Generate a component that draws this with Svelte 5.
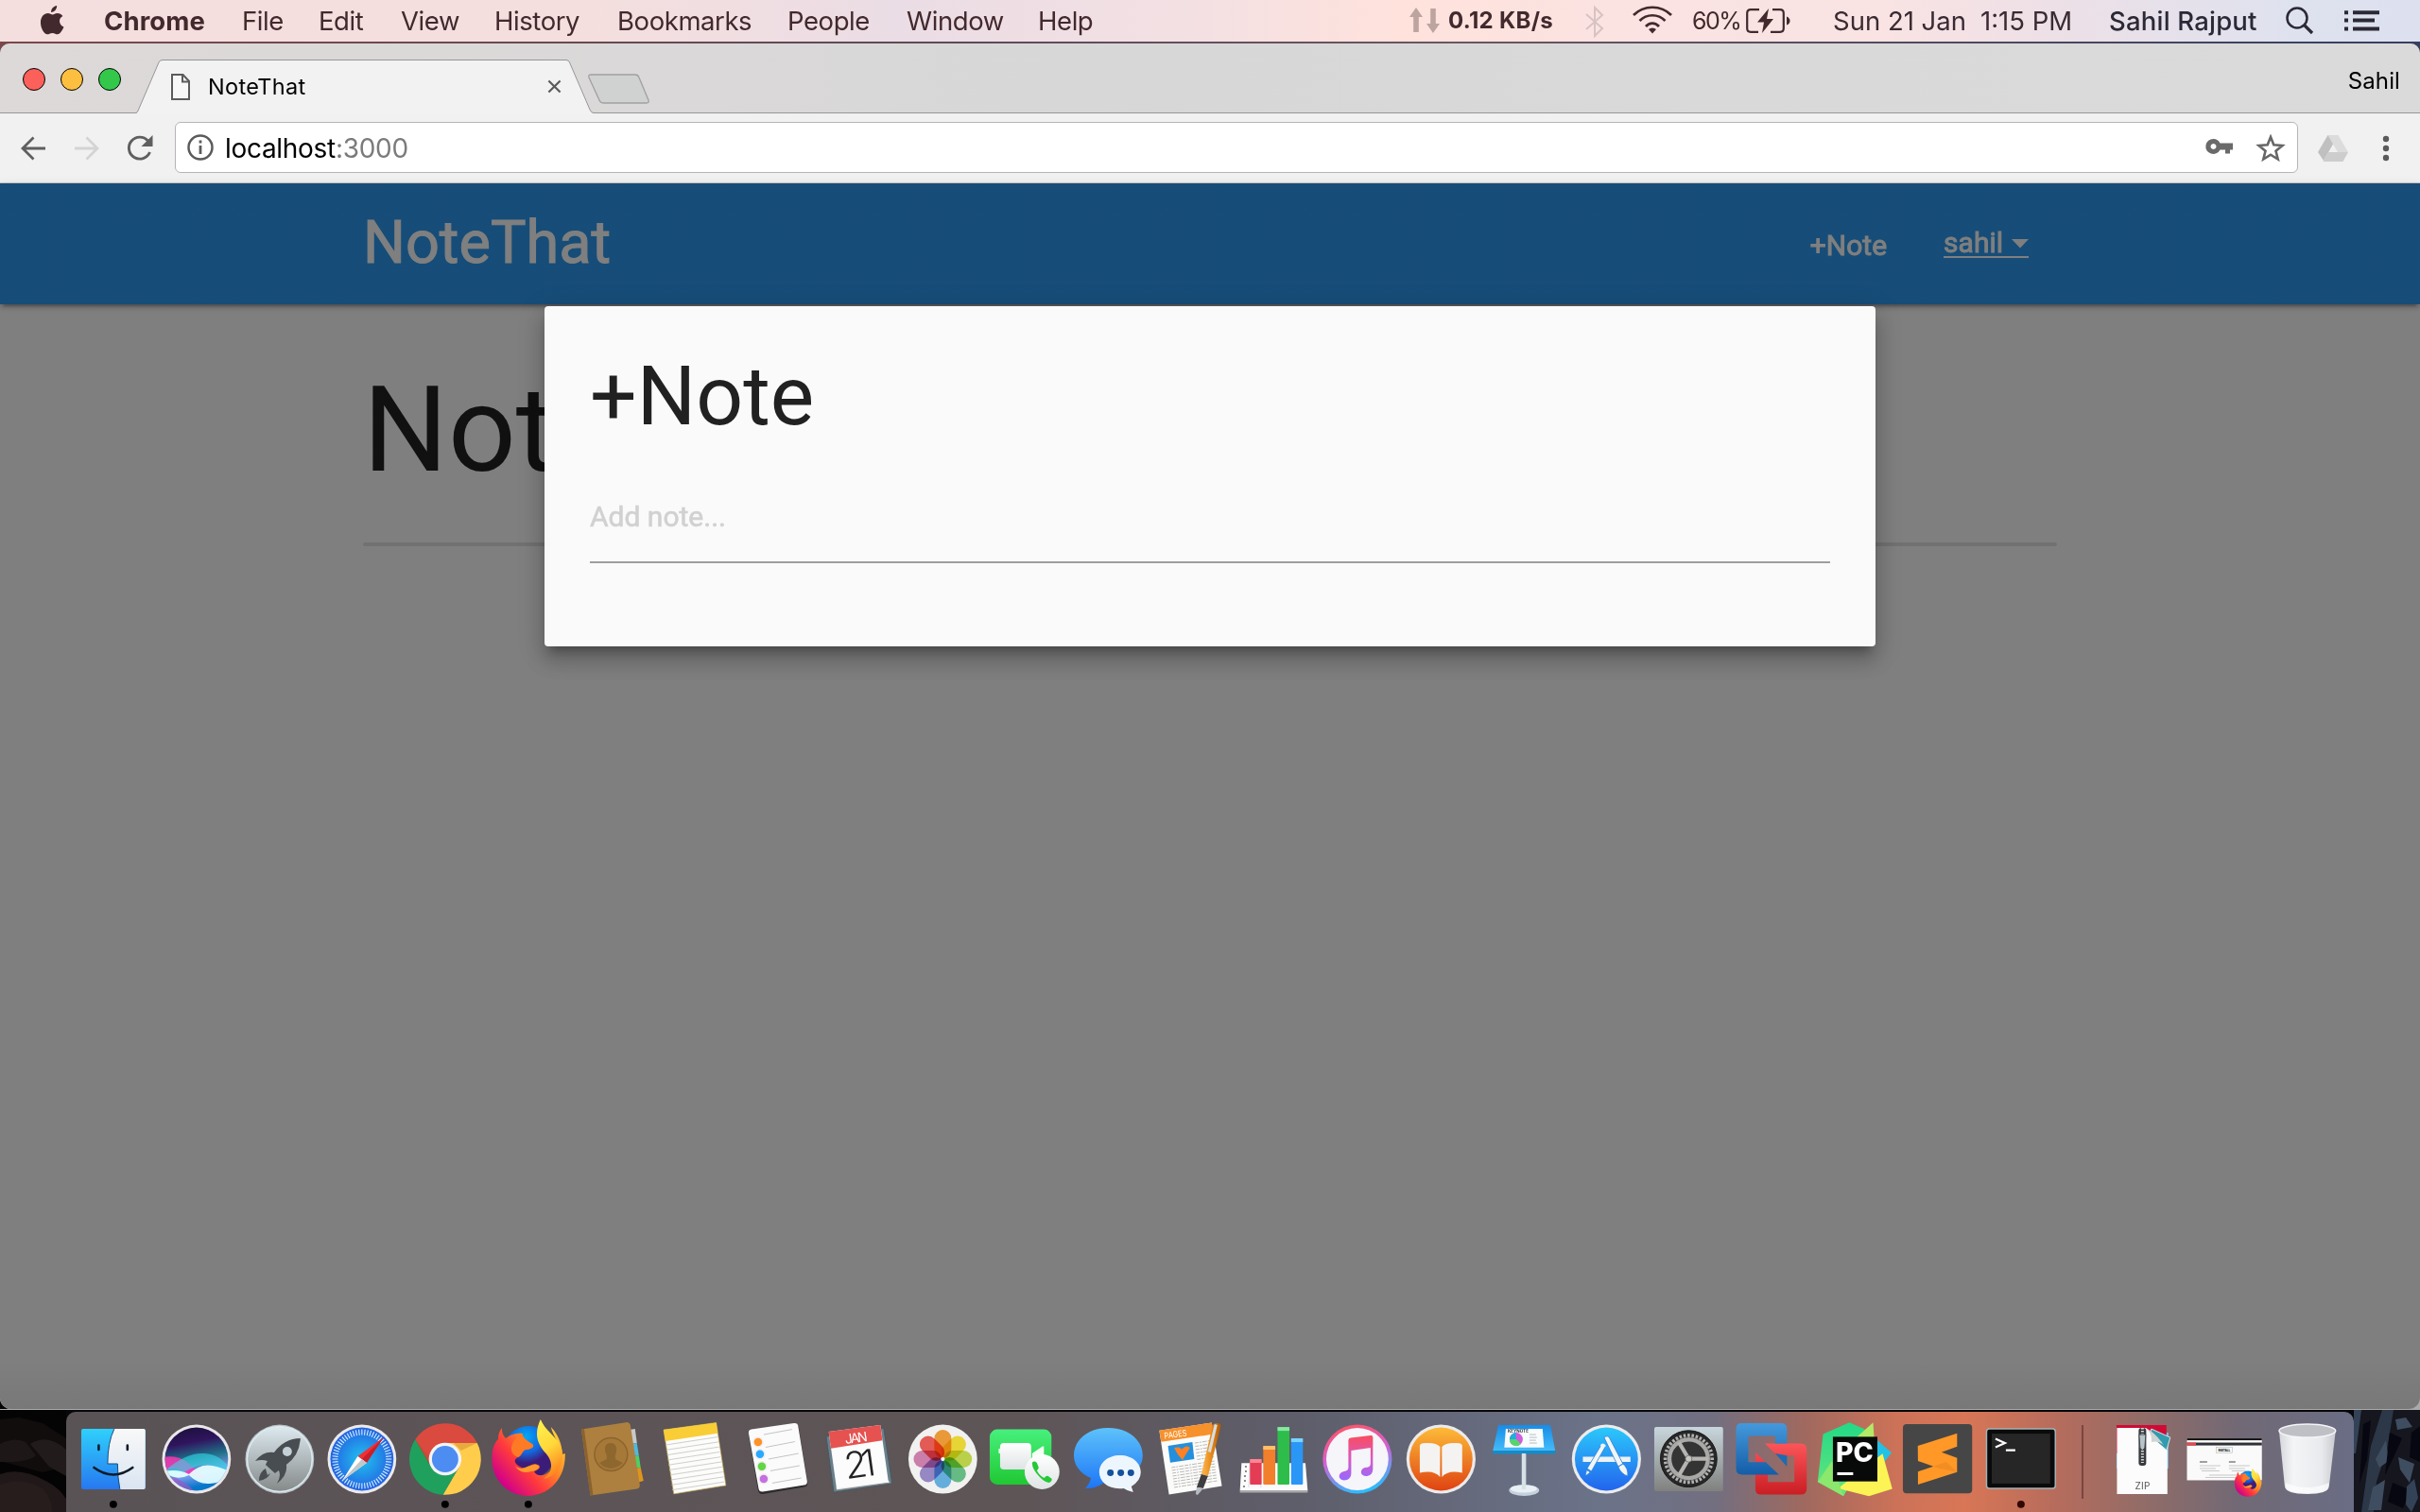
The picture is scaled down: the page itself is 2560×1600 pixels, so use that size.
<script>
  const menus = ['File', 'Edit', 'View', 'History', 'Bookmarks', 'People', 'Window', 'Help'];
  const petals = ['#f7a23b', '#f5e13a', '#c5dc4f', '#6cc58b', '#6bb8ea', '#a08fd0', '#d685b5', '#f0605a'];
  const ticks = Array.from({ length: 60 }, (_, i) => i * 6);
  const teeth = Array.from({ length: 36 }, (_, i) => i * 10);
  const noteLines = Array.from({ length: 10 }, (_, i) => 25 + i * 5.3);
  const textRows = Array.from({ length: 14 }, (_, i) => i);
</script>

{#snippet firefox()}
  <circle cx="44.5" cy="43" r="28" fill="url(#ffGlobe)" />
  <path d="M16 17C16 24 18 25 20 28C26 23 33 22 38 23C37 27 42 30 48 34C52 37 46 40 41 40C36 43 38 46 33 48C26 52 32 57 37 59C45 61 47 53 54 56C59 58 54 62 50 63C53 69 62 69 69 61C71 50 65 42 60 37C54 29 53 17 57 8C61 18 68 21 75 33C72 26 69 21 68 16C77 25 80 37 80 45L83 44C84 67 70 87 46 89C21 90 2 70 6 42C7 34 11 30 12 29C12 24 13 21 16 17Z" fill="url(#ffBody)" />
  <path d="M57 8C51 20 52 31 60 41C72 53 70 64 60 71C73 69 82 56 80 42C78 28 63 22 57 8Z" fill="url(#ffFlame)" />
  <path d="M38 23C37 27 42 30 48 34C52 37 46 40 41 40C36 43 38 46 33 48C23 45 23 31 38 23Z" fill="#ff7a25" />
  <path d="M30 57C38 65 45 54 53 56C59 58 52 63 47 63C40 65 34 64 30 57Z" fill="#ff9a2c" />
{/snippet}

<div class="screen">
  <header class="menubar">
    <svg class="apple" viewBox="0 0 28 34"><path d="M18.8 1C19 4.5 16.5 8 12.6 8.1C12.2 4.8 15.4 1.3 18.8 1ZM19.2 9.2C21.6 9.2 24 10.5 25.3 12.4C20 15.2 21 22 26.4 24.3C25.5 27 22.5 32.3 19.6 32.4C17.3 32.4 16.7 31 13.9 31C11.2 31 10.3 32.4 8.2 32.4C5.2 32.3 1 25.8 1 19.5C1 13 5 9.4 8.9 9.3C11.2 9.3 12.8 10.8 14.2 10.8C15.5 10.8 17 9.2 19.2 9.2Z" fill="#42292d" /></svg>
    <nav class="menus">
      <strong>Chrome</strong>
      {#each menus as menu}<span>{menu}</span>{/each}
    </nav>
    <div class="status">
      <svg class="net" viewBox="0 0 34 28"><path d="M8 0L15 10H10.8V26H5.2V10H1ZM26 27L33 17H28.8V1H23.2V17H19Z" fill="#bda49f" /></svg>
      <strong class="speed">0.12 KB/s</strong>
      <svg class="bt" viewBox="0 0 20 32"><path d="M1 8L18 23L10 31V1L18 9L1 24" fill="none" stroke="#d8c2c2" stroke-width="2" /></svg>
      <svg class="wifi" viewBox="0 0 42 30"><g fill="none" stroke="#42292d" stroke-width="2.7"><path d="M1 10C12-1 30-1 41 10M7.5 16C15 8.300 27 8.300 34.500 16M14 22C18 17.500 24 17.500 28 22" /></g><path d="M17 25C19.500 23 22.500 23 25 25L21 29.500Z" fill="#42292d" /></svg>
      <span class="pct">60%</span>
      <svg class="battery" viewBox="0 0 48 26"><path d="M14 1.200H5Q1.200 1.200 1.200 5V21Q1.200 24.800 5 24.800H13M28 1.200H36Q39.800 1.200 39.800 5V21Q39.800 24.800 36 24.800H26" fill="none" stroke="#42292d" stroke-width="2.200" /><path d="M24 0L12 14.500H19L17 26L29 11H22Z" fill="#42292d" /><path d="M43 8.500Q46.500 10 46.500 13T43 17.500Z" fill="#42292d" /></svg>
      <span class="date">Sun 21 Jan</span>
      <span class="time">1:15 PM</span>
      <span class="owner">Sahil Rajput</span>
      <svg class="search" viewBox="0 0 30 30"><circle cx="12" cy="12" r="10.500" fill="none" stroke="#2b2935" stroke-width="2.500" /><path d="M19.500 19.500L28 28" stroke="#2b2935" stroke-width="3.200" /></svg>
      <svg class="list" viewBox="0 0 38 22"><path d="M0 2.200H4M0 10.500H4M0 19.500H4M9 2.200H37M9 10.500H32M9 19.500H37" stroke="#2b2935" stroke-width="4" /></svg>
    </div>
  </header>

  <main class="window">
    <div class="tabstrip">
      <div class="lights"><i class="close"></i><i class="mini"></i><i class="zoom"></i></div>
      <div class="tab">
        <svg class="tab-shape" viewBox="0 0 484 57"><path d="M0 57Q1.500 56 2.500 53L24 3Q25 .500 28 .500H455Q457.500 .500 458.500 3L480 53Q481.500 56.500 484 56.500V58H0Z" fill="#f2f2f2" /><path d="M0 56.500Q1.500 56 2.500 53L24 3Q25 .500 28 .500H455Q457.500 .500 458.500 3L480 53Q481.500 56.500 484 56.500" fill="none" stroke="#979696" /></svg>
        <svg class="page-icon" viewBox="0 0 20 28"><path d="M1 1H12.500L19 8V27H1Z" fill="#fff" fill-opacity=".4" stroke="#5b5b5b" stroke-width="2" /><path d="M12 1V8.500H19" fill="none" stroke="#5b5b5b" stroke-width="2" /></svg>
        <span class="tab-title">NoteThat</span>
        <svg class="tab-close" viewBox="0 0 16 16"><path d="M1.500 1.500L14.500 14.500M14.500 1.500L1.500 14.500" stroke="#5a5a5a" stroke-width="2.300" /></svg>
      </div>
      <svg class="newtab" viewBox="0 0 68 33"><path d="M4 1H51Q54 1 55 4L65 28Q66 31 63 31H18Q14 31 13 28L2 4Q1 1 4 1Z" fill="#d0d1d1" stroke="#a0a0a0" stroke-width="1.300" /></svg>
      <span class="profile">Sahil</span>
    </div>

    <div class="toolbar">
      <svg class="back" viewBox="0 0 27 26"><path d="M26 13H2M13.500 1.500L2 13L13.500 24.500" fill="none" stroke="#5f5f5f" stroke-width="2.800" /></svg>
      <svg class="forward" viewBox="0 0 27 26"><path d="M1 13H25M13.500 1.500L25 13L13.500 24.500" fill="none" stroke="#d4d4d4" stroke-width="2.800" /></svg>
      <svg class="reload" viewBox="0 0 28 28"><path d="M22.500 6A11.500 11.500 0 1 0 24.500 18" fill="none" stroke="#5f5f5f" stroke-width="2.900" /><path d="M27.500 0V12H15.500Z" fill="#5f5f5f" /></svg>
      <div class="omnibox">
        <svg class="info" viewBox="0 0 28 28"><circle cx="14" cy="14" r="12.500" fill="none" stroke="#5b5b5b" stroke-width="2.500" /><path d="M14 12V21M14 6.500V9.500" stroke="#5b5b5b" stroke-width="2.800" /></svg>
        <span class="url">localhost<em>:3000</em></span>
        <svg class="key" viewBox="0 0 30 18"><path d="M8.500 1A8 8 0 1 0 15.500 12.500H21V16.500H26V12.500H29V5.500H15.500A8 8 0 0 0 8.500 1ZM8.500 6A3 3 0 1 1 8.490 6Z" fill="#6a6a6a" fill-rule="evenodd" /></svg>
        <svg class="star" viewBox="0 0 30 29"><path d="M15 3L18.300 11.300L27.500 12L20.500 17.800L22.700 26.500L15 21.700L7.300 26.500L9.500 17.800L2.500 12L11.700 11.300Z" fill="none" stroke="#666" stroke-width="2.600" /></svg>
      </div>
      <svg class="drive" viewBox="0 0 32 28"><path d="M10.500 0H21.500L16 9.500L6 27L0 18Z" fill="#c0c0c0" /><path d="M10.500 0H21.500L32 18H21Z" fill="#dcdcdc" /><path d="M11 18H32L26.500 28H5.500Z" fill="#cdcdcd" /></svg>
      <svg class="dots" viewBox="0 0 8 28"><circle cx="4" cy="4" r="3.200" /><circle cx="4" cy="14" r="3.200" /><circle cx="4" cy="24" r="3.200" /></svg>
    </div>

    <section class="page">
      <div class="navbar">
        <span class="brand">NoteThat</span>
        <span class="add">+Note</span>
        <span class="user">sahil <svg viewBox="0 0 18 10"><path d="M0 0H18L9 9.500Z" fill="#fff" /></svg></span>
      </div>
      <div class="content">
        <h1>Notes</h1>
        <hr />
      </div>
      <div class="overlay">
        <div class="modal">
          <h3>+Note</h3>
          <div class="field">Add note...</div>
        </div>
      </div>
    </section>
  </main>

  <footer class="desktop">
    <svg class="rocks left" viewBox="0 0 70 108"><rect width="70" height="108" fill="#050404" /><path d="M0 10L20 8L45 14L70 30V60L45 66L0 54Z" fill="#120d0d" /><path d="M0 36Q15 28 27 34L38 48Q30 56 0 55Z" fill="#1d1718" /><path d="M32 36Q50 24 70 42V70L52 60Z" fill="#211b1b" /><path d="M0 68Q22 60 50 76Q62 82 70 94V108H0Z" fill="#201819" /><path d="M0 79Q25 70 46 84Q56 96 55 108H0Z" fill="#271d1d" /></svg>

    <div class="dock">
      <svg class="icon" viewBox="0 0 88 106">
        <defs>
          <linearGradient id="finder" x2="0" y2="1"><stop stop-color="#2fd0fb" /><stop offset="1" stop-color="#2678f0" /></linearGradient>
          <linearGradient id="finderW" x2="0" y2="1"><stop stop-color="#f8f8f8" /><stop offset="1" stop-color="#dae5f2" /></linearGradient>
          <radialGradient id="ffGlobe" cx=".45" cy=".2"><stop stop-color="#00a8f5" /><stop offset=".6" stop-color="#1467df" /><stop offset="1" stop-color="#3c1c79" /></radialGradient>
          <linearGradient id="ffBody" x1=".85" y1=".1" x2=".1" y2=".8"><stop stop-color="#ffd23d" /><stop offset=".35" stop-color="#ff8b27" /><stop offset=".65" stop-color="#ff3a3d" /><stop offset="1" stop-color="#d1008a" /></linearGradient>
          <linearGradient id="ffFlame" x2=".3" y2="1"><stop stop-color="#fff34f" /><stop offset=".55" stop-color="#ffd83a" /><stop offset="1" stop-color="#ff8a20" /></linearGradient>
        </defs>
        <rect x="10" y="18" width="68" height="64" rx="2" fill="url(#finder)" />
        <path d="M45 18H76Q78 18 78 20V80Q78 82 76 82H51Q49 70 48.500 55H38Q38 32 45 18Z" fill="url(#finderW)" />
        <path d="M45 18Q38 32 38 55H48.500Q48.500 70 51 82" fill="none" stroke="#174c7c" stroke-width="1" />
        <path d="M28.500 35.500V40M59 35.500V40M23.500 59Q44 74 64.500 59" fill="none" stroke="#0f1c28" stroke-width="2.600" stroke-linecap="round" />
        <circle cx="44" cy="98" r="4" />
      </svg>

      <svg class="icon" viewBox="0 0 88 106">
        <defs><linearGradient id="siri" x2=".2" y2="1"><stop stop-color="#171033" /><stop offset=".3" stop-color="#30145e" /><stop offset=".55" stop-color="#206f87" /><stop offset=".8" stop-color="#7f9dec" /><stop offset="1" stop-color="#0876c9" /></linearGradient><clipPath id="siriClip"><circle cx="44" cy="50" r="33.500" /></clipPath></defs>
        <circle cx="44" cy="50" r="36.500" fill="#e9e7ea" /><circle cx="44" cy="50" r="33.500" fill="url(#siri)" />
        <g clip-path="url(#siriClip)">
          <path d="M9 48Q25 45 36 55T56 72Q40 70 30 63T9 64Z" fill="#fa36b3" fill-opacity=".85" />
          <path d="M11 62Q33 43 52 44T80 62L78 70Q60 46 31 64T11 62Z" fill="#32dbe9" fill-opacity=".6" />
          <path d="M9 63Q25 60 36 66Q48 54 61 57T80 64Q71 77 56 76Q45 76 36 67Q22 74 9 63Z" fill="#e5ffff" fill-opacity=".93" />
          <path d="M12 67Q30 71 42 84H20Z" fill="#9e58c5" fill-opacity=".7" />
        </g>
      </svg>

      <svg class="icon" viewBox="0 0 88 106">
        <defs><linearGradient id="launch" x2="0" y2="1"><stop stop-color="#dce9ef" /><stop offset="1" stop-color="#858989" /></linearGradient></defs>
        <circle cx="44" cy="50" r="36.500" fill="#b8c2c7" /><circle cx="44" cy="50" r="34.500" fill="url(#launch)" stroke="#dcebf1" stroke-width="1.500" />
        <path d="M66 28Q49 28 38 43Q27 41 18 52Q25 50 31 52L29 56L39 65L43 62Q46 68 41 76Q53 67 51 56Q65 46 66 28Z" fill="#474d50" />
        <circle cx="52" cy="42" r="5" fill="#c3d0d5" /><path d="M29 60Q22 64 22 73Q31 72 34 65L31 67Z" fill="#474d50" />
      </svg>

      <svg class="icon" viewBox="0 0 88 106">
        <defs><radialGradient id="safari"><stop stop-color="#20c3ef" /><stop offset="1" stop-color="#2463e2" /></radialGradient></defs>
        <circle cx="44" cy="50" r="36.500" fill="#eceaea" /><circle cx="44" cy="50" r="33.500" fill="url(#safari)" />
        {#each ticks as angle}<path d="M44 18.500V24.500" stroke="#d6eefc" stroke-width="1.100" transform="rotate({angle} 44 50)" />{/each}
        <path d="M67 27L39.500 47L49 54Z" fill="#f12f35" /><path d="M49 54L67 27L44 50Z" fill="#c91f29" /><path d="M23 73L39.500 47L49 54Z" fill="#fff" /><path d="M49 54L23 73L44 50Z" fill="#c2c7c9" />
      </svg>

      <svg class="icon" viewBox="0 0 88 106">
        <path d="M12.300 29.100A38 38 0 0 1 78 33H44L29.300 58.500Z" fill="#db4a3f" />
        <path d="M78 33A38 38 0 0 1 41.700 87.900L58.700 58.500L44 33Z" fill="#ffcd4b" />
        <path d="M41.700 87.900A38 38 0 0 1 12.300 29.100L29.300 58.500H58.700Z" fill="#1fa15d" />
        <path d="M53 33H78L61 41ZM13 31L29 59L27 47Z" fill="#a34518" fill-opacity=".25" />
        <circle cx="44" cy="50" r="17.300" fill="#f4f4f4" /><circle cx="44" cy="50" r="14" fill="#4d8df2" />
        <circle cx="44" cy="98" r="4" />
      </svg>

      <svg class="icon" viewBox="0 0 88 106">{@render firefox()}<circle cx="44" cy="98" r="4" /></svg>

      <svg class="icon" viewBox="0 0 88 106">
        <path d="M63 19L69 18L71 33L65 34Z" fill="#c9c9c9" /><path d="M65 34L71 33L73 46L67 47Z" fill="#50b9df" /><path d="M67 47L73 46L75 59L69 60Z" fill="#4fcf67" /><path d="M69 60L75 59L78 73L71 75Z" fill="#df951d" />
        <path d="M12 18.500L59 11Q63 10.500 64 14L74 77Q74.500 81 71 81.500L21.600 88.700Z" fill="#ad803f" /><path d="M12 18.500L15 18L24.500 88L21.600 88.700Z" fill="#8b622d" />
        <circle cx="43.500" cy="45" r="17.500" fill="#a67939" stroke="#8c642d" stroke-width="1.500" />
        <path d="M43 33C36 33 36 41 39 46V50L31 54Q43 66 56 54L48 50V46C51 39 49 33 43 33Z" fill="#8e672f" />
      </svg>

      <svg class="icon" viewBox="0 0 88 106">
        <path d="M12 19L67.900 11.300L78.200 78L22.800 87Z" fill="#fcfcfa" stroke="#b79b46" stroke-width=".7" />
        <path d="M12 19L67.900 11.300L69.300 22.700L14 31Z" fill="#f9cd35" />
        {#each noteLines as y, i}<path d="M{14.200 + i * .8} {y + 10}L{69.300 + i * .8} {y + 1.500}" stroke="#c8c8c8" stroke-width=".9" />{/each}
      </svg>

      <svg class="icon" viewBox="0 0 88 106">
        <path d="M17 20L62 13Q66 12 67 16L76.500 75Q77 79 73 79.500L29 87Q25 87.500 24 83L14 24Q13.500 21 17 20Z" fill="#2d2a2b" />
        <path d="M17 18.500L62 12Q66 11.500 66.500 15L76 73Q76.500 77 73 77.500L29 84.500Q25 85 24.500 81L14 23Q13.500 19 17 18.500Z" fill="#fbfbfb" />
        <path d="M30 24L60 18.500M32 37.500L63 31.500M35 50L67 44M37 62.500L68 57M39 75.500L70 70" stroke="#c4c4c4" />
        <g stroke="#eee" stroke-width="1.500"><circle cx="24" cy="32" r="5" fill="#ff9226" /><circle cx="26" cy="44.700" r="5" fill="#29a9ff" /><circle cx="28" cy="57.700" r="5" fill="#62d641" /><circle cx="30" cy="71" r="5" fill="#c66fe0" /></g>
      </svg>

      <svg class="icon" viewBox="0 0 88 106">
        <path d="M8 26L69 17L78 76L16 85.300Z" fill="#6a7f8a" stroke="#455862" /><path d="M19 83L76 75L74 72L18 80Z" fill="#eee" stroke="#777" stroke-width=".8" />
        <path d="M10.700 21L65.500 14L74.100 74.300L19 81Z" fill="#fcfcfc" /><path d="M10.700 21L65.500 14L67.600 30.300L13.100 38.700Z" fill="#e55250" />
        <g transform="rotate(-8 44 50)" text-anchor="middle" font-family="Inter, sans-serif"><text x="43" y="32" font-size="14" fill="#fff" textLength="24">JAN</text><text x="43" y="69" font-size="39" font-weight="300" fill="#222" textLength="33">21</text></g>
      </svg>

      <svg class="icon" viewBox="0 0 88 106">
        <circle cx="44.500" cy="50" r="36.500" fill="#f1f1f0" />
        <g class="petals">{#each petals as color, i}<rect x="35.500" y="19" width="18" height="30" rx="9" fill={color} transform="rotate({i * 45} 44.500 50)" />{/each}</g>
        <circle cx="44.500" cy="50" r="2" fill="#fff" />
      </svg>

      <svg class="icon" viewBox="0 0 88 106">
        <defs><linearGradient id="ftime" x2="0" y2="1"><stop stop-color="#47f07c" /><stop offset="1" stop-color="#20c833" /></linearGradient><linearGradient id="pearl" x2="0" y2="1"><stop stop-color="#fff" /><stop offset="1" stop-color="#dfe3e4" /></linearGradient></defs>
        <rect x="6" y="18.500" width="65.500" height="58.500" rx="8" fill="url(#ftime)" /><rect x="17" y="33" width="33" height="28" rx="4" fill="url(#pearl)" /><path d="M51 44L62 36.500H63.500V56H62L51 50ZM15.500 39H17V44H15.500Z" fill="#f4fff4" />
        <circle cx="61.500" cy="63.500" r="18.500" fill="url(#pearl)" />
        <path d="M51 54Q53 51 56 54L58 59Q57 62 56 62Q59 68 64 70Q66 67 68 68L72 71Q72 74 69 75Q65 75 59 69Q51 61 51 54Z" fill="#24c936" />
      </svg>

      <svg class="icon" viewBox="0 0 88 106">
        <defs><linearGradient id="msg" x2="0" y2="1"><stop stop-color="#5dc2fb" /><stop offset="1" stop-color="#1d76f6" /></linearGradient></defs>
        <path d="M43 17C65 17 80 30 80 46C80 64 61 75 39 75Q29 82 19 81Q24 76 25 70C13 65 7 56 7 46C7 29 23 17 43 17Z" fill="url(#msg)" />
        <path d="M56 46C69 46 78 54 78 64Q78 73 68 79L70 85Q64 84 60 81C44 83 34 74 34 64C34 54 43 46 56 46Z" fill="#edf6fd" />
        <g fill="#15529b"><circle cx="45.800" cy="64.500" r="3.500" /><circle cx="56.800" cy="64.500" r="3.500" /><circle cx="67.500" cy="64.500" r="3.500" /></g>
      </svg>

      <svg class="icon" viewBox="0 0 88 106">
        <defs><linearGradient id="pen"><stop stop-color="#ffb94e" /><stop offset=".5" stop-color="#e78a1c" /><stop offset="1" stop-color="#a95704" /></linearGradient></defs>
        <path d="M9.400 19.700L65 11.300L75.800 78.700L19.700 87.700Z" fill="#fbfbf9" /><path d="M9.400 19.700L65 11.300L67 23.500L11.500 31.700Z" fill="#f7912b" />
        <text x="15" y="28.500" font-size="9" fill="#fff" font-family="Inter, sans-serif" transform="rotate(-8 15 28)" textLength="24" lengthAdjust="spacingAndGlyphs">PAGES</text>
        <path d="M18.600 36L44.500 32L46.500 50L21 53.700Z" fill="#248fdc" /><path d="M25 38Q32 36 33 40Q38 34 42 38L37 46L34 51L29 45Z" fill="#ff8124" />
        {#each textRows as i}<path d="M{i < 6 ? 47 + i * .5 : 20 + i * .4} {i < 6 ? 33 + i * 3.500 : 41 + i * 3}L{66 + i * .4} {i < 6 ? 30 + i * 3.500 : 34 + i * 3}" stroke="#a9a9a9" stroke-dasharray="4 1 2 1 5 1" stroke-width=".8" />{/each}
        <path d="M66 14Q70 10 75 14L61 68L54 66Z" fill="url(#pen)" /><path d="M54 66L61 68L56 81L49 80Z" fill="#3e3e40" /><path d="M49 80L56 81L50 88L48 87Z" fill="#b6bbc1" /><path d="M68 13L71 14L64 43L61 42Z" fill="#d6dde2" />
      </svg>

      <svg class="icon" viewBox="0 0 88 106">
        <path d="M9.400 54.300H77.200L79.600 83.700H7.700Z" fill="#fbfbfb" /><path d="M7.700 83.700H79.600V85.500H7.700Z" fill="#a9a9a9" />
        <path d="M18 55L17 80M30 55V80" stroke="#ddd" /><path d="M13 58H15M13 63H15M12 68H14M12 73H14M11 79H13" stroke="#666" stroke-width="1.500" />
        <rect x="18.300" y="50" width="12.400" height="27" rx="1" fill="#e43c55" /><rect x="18.300" y="50" width="12.400" height="4" fill="#ff8590" />
        <rect x="32.400" y="36" width="12.800" height="41" rx="1" fill="#f27f2b" /><rect x="32.400" y="36" width="12.800" height="4" fill="#ffc06b" />
        <rect x="47.600" y="16" width="12.600" height="61" rx="1" fill="#2ebd4b" /><rect x="47.600" y="16" width="12.600" height="4" fill="#86e9a0" />
        <rect x="62" y="28" width="12.500" height="49" rx="1" fill="#2a96f6" /><rect x="62" y="28" width="12.500" height="4" fill="#7bd5ff" />
      </svg>

      <svg class="icon" viewBox="0 0 88 106">
        <defs><linearGradient id="tune" x1=".3" x2=".6" y2="1"><stop stop-color="#ff5361" /><stop offset=".45" stop-color="#d460d6" /><stop offset="1" stop-color="#22c2ff" /></linearGradient><linearGradient id="tuneNote" x2="0" y2="1"><stop stop-color="#fa4c5d" /><stop offset=".55" stop-color="#d75ac6" /><stop offset="1" stop-color="#9569ff" /></linearGradient></defs>
        <circle cx="44" cy="50" r="36.700" fill="url(#tune)" /><circle cx="44" cy="50" r="33" fill="#f5f5fa" />
        <path d="M34.500 30Q34.500 28 37 27.500L58 25Q60.500 24.500 60.500 27V60C60.500 66 57 68 53 68C46 68 47 60 52 59Q58 59 58 55V38L37.500 41V65C37.500 70 34 72.500 30 72.500C23 72.500 23 64 30 63Q34.500 62.500 34.500 59Z" fill="url(#tuneNote)" />
      </svg>

      <svg class="icon" viewBox="0 0 88 106">
        <defs><linearGradient id="books" x2="0" y2="1"><stop stop-color="#fdbb38" /><stop offset="1" stop-color="#df4312" /></linearGradient></defs>
        <circle cx="44.500" cy="50" r="36.700" fill="#ecebeb" /><circle cx="44.500" cy="50" r="33.500" fill="url(#books)" />
        <path d="M43.500 37Q39 32 28 33Q22 33 22 36V64.500Q37 61 43.500 69Z" fill="#f4f3f1" /><path d="M45.500 37Q50 32 61 33Q67 33 67 36V64.500Q52 61 45.500 69Z" fill="#f4f3f1" />
      </svg>

      <svg class="icon" viewBox="0 0 88 106">
        <defs><linearGradient id="key" x2="0" y2="1"><stop stop-color="#168de8" /><stop offset="1" stop-color="#45bbf8" /></linearGradient></defs>
        <path d="M17.200 14H72.300L77.400 41H11.300Z" fill="url(#key)" /><path d="M11.300 41H77.400V44.500H11.300Z" fill="#168bc9" />
        <path d="M25 18H64L65.500 37.700H23.400Z" fill="#f9fcff" /><circle cx="36" cy="29" r="7" fill="#d15bdd" /><path d="M36 29L36 22A7 7 0 0 0 29 29Z" fill="#24acdf" /><path d="M36 29H29A7 7 0 0 0 41 34Z" fill="#55d66b" /><text x="27" y="22" font-size="4.500" font-weight="700" fill="#333" font-family="Inter, sans-serif" textLength="22">KEYNOTE</text><path d="M50 24H57M50 27H58M50 30H57M50 33H58" stroke="#bbb" />
        <rect x="42" y="44.500" width="4.500" height="39" fill="#d7e0e8" /><path d="M45 44.500V84" stroke="#8d9cab" /><ellipse cx="44.400" cy="83" rx="16" ry="6" fill="#c5d1dc" /><ellipse cx="44" cy="81.500" rx="14" ry="4" fill="#e9f0f5" /><path d="M42 44V82H46V44" fill="#d6e1e8" />
      </svg>

      <svg class="icon" viewBox="0 0 88 106">
        <defs><linearGradient id="store" x2="0" y2="1"><stop stop-color="#2bc8fb" /><stop offset="1" stop-color="#2364ed" /></linearGradient></defs>
        <circle cx="44.500" cy="50" r="36.700" fill="#ececec" /><circle cx="44.500" cy="50" r="33.500" fill="url(#store)" />
        <path d="M19.500 47.500H70V53H19.500Z" fill="#edf2f5" />
        <path d="M39 35L43 37.500L28.500 63L24 60ZM23.500 61.500L27.500 64L22 68Z" fill="#f2f5f6" stroke="#287fda" stroke-width=".8" />
        <path d="M42 27Q46 24 48 28L62 55L57 58ZM57 58L62 55Q68 60 67 68Q60 66 57 58Z" fill="#f2f5f6" stroke="#287fda" stroke-width=".8" /><path d="M39 34Q42 32 44 36L42 38L38 36Z" fill="#f2f5f6" />
      </svg>

      <svg class="icon" viewBox="0 0 88 106">
        <defs><linearGradient id="prefs" x2="0" y2="1"><stop stop-color="#c8d6dc" /><stop offset="1" stop-color="#80817f" /></linearGradient></defs>
        <rect x="7" y="16" width="73" height="68" rx="2" fill="url(#prefs)" /><circle cx="43.500" cy="49.700" r="30" fill="#272727" stroke="#171717" />
        {#each teeth as angle}<path d="M42.200 23H44.800V29H42.200Z" fill="#b2b2b2" transform="rotate({angle} 43.500 49.700)" />{/each}
        <circle cx="43.500" cy="49.700" r="20.500" fill="#343434" stroke="#a8a8a6" stroke-width="4.500" /><circle cx="43.500" cy="49.700" r="23" fill="none" stroke="#555" stroke-width=".7" />
        <path d="M43.500 49.700H64M43.500 49.700L33 32M43.500 49.700L33 67.500" stroke="#b5b4b1" stroke-width="4.200" /><circle cx="43.500" cy="49.700" r="3.500" fill="#c7c6c2" stroke="#666" stroke-width=".8" />
      </svg>

      <svg class="icon" viewBox="0 0 88 106">
        <defs><linearGradient id="vmBlue" x2="0" y2="1"><stop stop-color="#4499db" /><stop offset="1" stop-color="#145da7" /></linearGradient><linearGradient id="vmRed" x2="0" y2="1"><stop stop-color="#fb555a" /><stop offset="1" stop-color="#c91e23" /></linearGradient></defs>
        <path d="M32 87.700Q26 87.700 26 81.500V43L39.200 55.500V74.300H67.400V46.300H49L36 33.500H74Q80.500 33.500 80.500 40V81Q80.500 87.700 74 87.700Z" fill="url(#vmRed)" />
        <path d="M12 12H53Q59.500 12 59.500 18V33.500H47V25.300H18.500V53.300H37L51 66.500H12Q5.500 66.500 5.500 60V18Q5.500 12 12 12Z" fill="url(#vmBlue)" />
        <path d="M47 44L59.500 46.300V58Z" fill="#1d6bb0" />
      </svg>

      <svg class="icon" viewBox="0 0 88 106">
        <defs><linearGradient id="pyGreen" x2="0" y2="1"><stop stop-color="#22d987" /><stop offset="1" stop-color="#6be57b" /></linearGradient></defs>
        <path d="M9.600 23.300L37.500 11L53 18L66 34L33 86L31.300 89.300L3.800 74.300Z" fill="url(#pyGreen)" /><path d="M44 28L62.700 11L64 31Z" fill="#b2ea67" /><path d="M67 30L82.300 43.300L72 56L60 47Z" fill="#21c2e5" /><path d="M72.700 44.300L83 81.700L58.200 89.300L25.500 81Z" fill="#fcf454" /><path d="M4 74L19 52L31 89Z" fill="#8ce76d" />
        <rect x="20" y="26.300" width="47.200" height="47.400" fill="#080909" /><text x="23" y="53" font-size="28" font-weight="800" fill="#fff" font-family="Inter, sans-serif" textLength="40" lengthAdjust="spacingAndGlyphs">PC</text><rect x="24.500" y="64" width="17" height="3" fill="#fff" />
      </svg>

      <svg class="icon" viewBox="0 0 88 106">
        <rect x="7" y="13" width="73.500" height="73.300" rx="4" fill="#464646" />
        <path d="M22.800 36L64.500 22.700V36.700L48 42.700L64.500 48.700V63.700L23 77V63.300L39.300 57.700L23 52Z" fill="#ff9827" /><path d="M39.300 57.700L53 53L64.500 63.700L46 60Z" fill="#e1801f" fill-opacity=".45" />
      </svg>

      <svg class="icon" viewBox="0 0 88 106">
        <rect x="7.500" y="18" width="73" height="63" rx="3" fill="#0a0a0a" stroke="#a2b3b7" stroke-width="1.500" /><rect x="13" y="23" width="62" height="53" fill="#262626" />
        <path d="M17 28.500L27 33L17 37.500M28 40.500H38" fill="none" stroke="#fff" stroke-width="2.200" /><circle cx="44" cy="98" r="4" fill="#300705" />
      </svg>

      <i class="separator"></i>

      <svg class="icon" viewBox="0 0 88 106">
        <path d="M17 16H19V60H17ZM69 22H72V60H69Z" fill="#7bc4ec" /><path d="M17 14H70V44H17Z" fill="#cf0b35" /><path d="M54 18L74 27L70 41L50 32Z" fill="#329bae" stroke="#d8e6e9" />
        <path d="M17.500 17H48Q53 20 55 27L71 41V87H17.500Z" fill="#fcfcfc" /><path d="M48 17Q55 22 54 32Q65 29 71 41Q60 23 48 17Z" fill="#d1d3d4" />
        <rect x="40.500" y="17" width="8" height="40" rx="3" fill="#383b3e" /><path d="M44.500 17V54" stroke="#d9d9d9" stroke-width="3" stroke-dasharray="1.500 1.500" /><path d="M41 24H48L47 38L44.500 41L42 38Z" fill="#b8c3c9" stroke="#474b4f" />
        <text x="36.500" y="82" font-size="10" fill="#555" font-family="Inter, sans-serif" textLength="16">ZIP</text>
      </svg>

      <svg class="icon" viewBox="0 0 88 106">
        <rect x="4.500" y="28" width="79.500" height="44.500" fill="#fafafa" /><rect x="4.500" y="28" width="79.500" height="2" fill="#111" /><rect x="4.500" y="32.500" width="79.500" height="3" fill="#2e3137" /><rect x="4.500" y="32.500" width="9.500" height="3" fill="#ef474b" />
        <text x="37.500" y="42" font-size="4" font-weight="700" font-family="Inter, sans-serif" textLength="13" lengthAdjust="spacingAndGlyphs">INSTALL</text><rect x="35.500" y="37.500" width="17" height="6" fill="none" stroke="#aaa" stroke-width=".5" /><path d="M18 53H26M49 53H56" stroke="#444" /><path d="M18 57H40M18 60H35M20 62.500H39M49 57H71M49 60H66M52 62.500H68M28 67H59M24 69.500H57" stroke="#c8c8c8" />
        <g transform="translate(53 57) scale(.37)">{@render firefox()}</g>
      </svg>

      <svg class="icon" viewBox="0 0 88 106">
        <defs><linearGradient id="trash"><stop stop-color="#d6d7da" /><stop offset=".25" stop-color="#f4f5f7" /><stop offset=".75" stop-color="#e8eaed" /><stop offset="1" stop-color="#c8cace" /></linearGradient></defs>
        <path d="M14 20L20 79Q21 87 44 87Q66 87 67 79L74 20Z" fill="url(#trash)" /><ellipse cx="44" cy="20" rx="30" ry="7" fill="#bfc0c5" stroke="#f5f5f7" stroke-width="1.500" /><path d="M21 75Q44 85 67 75L66 81Q64 86 44 86T21 80Z" fill="#fff" fill-opacity=".65" />
      </svg>
    </div>

    <svg class="rocks right" viewBox="0 0 70 108"><rect width="70" height="108" fill="#15161e" /><path d="M8 108L18 38L30 0H42L35 42L24 76L21 108Z" fill="#2c3747" /><path d="M44 10L55 8L62 18L46 21ZM23 52L34 32L37 54L27 61ZM47 50L64 57L59 77L49 63ZM20 82L33 74L29 106H15Z" fill="#3f4d60" /><path d="M10 15L18 11L14 52L6 78ZM38 24L51 30L43 48L33 69ZM61 24L70 17V55L59 50ZM41 77L60 85L52 104L36 97Z" fill="#060710" /><path d="M0 0H8L2 46H0ZM56 81L64 73L68 93L61 108L55 100Z" fill="#334257" /></svg>
  </footer>
</div>

<style>
  :global(body) { margin: 0; overflow: hidden; background: #050405; }
  .screen { width: 2560px; height: 1600px; overflow: hidden; display: flex; flex-direction: column; font-family: Inter, 'Liberation Sans', sans-serif; background: linear-gradient(90deg, #79474c, #5c4a58 40%, #6c5560 60%, #353f60) 0 0 / 100% 800px no-repeat, linear-gradient(90deg, #070606 50%, #aaa 50%); }
  svg { display: block; flex: none; overflow: visible; }

  .menubar { height: 44px; margin-bottom: 2px; display: flex; align-items: center; background: linear-gradient(90deg, #f5dfde 0, #f5dfde 24%, #ebdde5 37%, #f3e0e3 49%, #ffe2dc 58%, #fae3e2 68%, #f9e3e3 78%, #ede0e7 85%, #dee2ef 95%, #dde1ef); color: #42292d; font-size: 27.500px; line-height: 44px; white-space: nowrap; }
  .apple { width: 27px; height: 33px; margin: -2px 41px 0 42px; }
  .menus { display: grid; grid-template-columns: 146px 81px 87px 99px 130px 180px 126px 139px 70px; width: 1059px; letter-spacing: -.42px; }
  .menus strong { font-weight: 700; letter-spacing: .1px; }
  .status { display: grid; grid-template-columns: 42px 145px 50px 63px 57px 92px 156px 136px 187px 62px 38px; margin-left: 321px; align-items: center; }
  .net { width: 34px; height: 28px; }
  .speed { font-size: 24px; letter-spacing: .3px; }
  .bt { width: 20px; height: 32px; margin-top: 2px; }
  .wifi { width: 42px; height: 30px; margin-top: -2px; }
  .pct { font-size: 25px; letter-spacing: -1.500px; }
  .battery { width: 48px; height: 26px; }
  .time, .owner, .date { color: #3a2b33; letter-spacing: 0; }
  .owner { color: #2b2935; font-weight: 500; letter-spacing: .2px; }
  .search { width: 30px; height: 30px; }
  .list { width: 38px; height: 22px; }

  .window { height: 1445px; border-radius: 10px 10px 12px 12px; overflow: hidden; display: flex; flex-direction: column; background: #808080; }
  .tabstrip { height: 74px; box-sizing: border-box; border-bottom: 1px solid #979696; background: linear-gradient(90deg, #dcd9d8, #dad8d8 30%, #d7d7d7 48%, #dad9d9 70%, #dadada); display: flex; }
  .lights { display: flex; gap: 16px; padding: 26px 0 0 24px; width: 121px; }
  .lights i { width: 24px; height: 24px; box-sizing: border-box; border-radius: 50%; border: 1px solid; }
  .close { background: #fc605b; border-color: #e2453f; }
  .mini { background: #fdbf40; border-color: #e0a02f; }
  .zoom { background: #34c84a; border-color: #24ab35; }
  .tab { position: relative; width: 484px; height: 57px; margin-top: 17px; margin-left: -1px; display: flex; align-items: center; }
  .tab-shape { position: absolute; inset: 0; width: 484px; height: 57px; }
  .page-icon, .tab-title, .tab-close { position: relative; }
  .page-icon { width: 20px; height: 28px; margin-left: 37px; }
  .tab-title { font-size: 23.500px; letter-spacing: .3px; width: 359px; margin-left: 19px; color: #000; }
  .tab-close { width: 15px; height: 15px; }
  .newtab { width: 68px; height: 33px; margin: 32px 0 0 -7px; }
  .profile { margin: 25px 21px 0 auto; font-size: 24px; line-height: 30px; letter-spacing: .1px; }

  .toolbar { height: 74px; box-sizing: border-box; border-bottom: 1px solid #c9c9c9; background: #f1f1f1; display: flex; align-items: center; }
  .back { width: 27px; height: 26px; margin-left: 22px; }
  .forward { width: 27px; height: 26px; margin-left: 29px; }
  .reload { width: 28px; height: 28px; margin-left: 29px; }
  .omnibox { width: 2246px; height: 54px; box-sizing: border-box; border: 1px solid #b6b4b6; border-radius: 6px; margin-left: 23px; margin-top: -1px; background: #fff; display: flex; align-items: center; padding: 0 13px 0 12px; }
  .info { width: 28px; height: 28px; }
  .url { font-size: 28px; letter-spacing: -.3px; margin-left: 12px; padding-top: 2px; flex: 1; }
  .url em { font-style: normal; color: #7b7b7b; }
  .key { width: 30px; height: 18px; margin-top: -3px; }
  .star { width: 30px; height: 29px; margin-left: 24px; }
  .drive { width: 32px; height: 28px; margin-left: 21px; }
  .dots { width: 8px; height: 28px; margin-left: 36px; fill: #5a5a5a; }

  .page { position: relative; height: 1297px; background: #fff; font-family: Roboto, sans-serif; display: flex; flex-direction: column; }
  .navbar { height: 128px; flex: none; box-sizing: border-box; padding: 0 414px 0 384px; display: flex; align-items: center; background: #2d9af0; color: #fff; box-shadow: 0 4px 4px 0 rgba(0,0,0,.14), 0 2px 10px 0 rgba(0,0,0,.12), 0 6px 2px -4px rgba(0,0,0,.2); }
  .brand { font-size: 63px; flex: 1; padding-bottom: 4px; -webkit-text-stroke: 1px #fff; }
  .add { font-size: 30px; -webkit-text-stroke: .9px #fff; margin-right: 60px; padding-top: 2px; }
  .user { font-size: 30px; -webkit-text-stroke: .9px #fff; display: flex; gap: 9px; align-items: center; border-bottom: 2px solid #fff; line-height: 29px; height: 29px; margin-top: -1px; }
  .user svg { width: 18px; height: 10px; margin-top: 3px; }
  .content { padding: 0 384px; color: rgba(0,0,0,.87); }
  h1 { font-size: 126px; line-height: 138px; font-weight: 400; margin: 64px 0 50px; }
  hr { height: 4px; margin: 0; border: 0; border-radius: 2px; background: #e3e3e3; }
  .overlay { position: absolute; inset: 0; background: linear-gradient(rgba(0,0,0,.5) 96%, rgba(0,0,0,.53)); }
  .modal { width: 1408px; height: 360px; box-sizing: border-box; margin: 130px auto 0; padding: 47px 48px; border-radius: 4px; background: #fafafa; color: rgba(0,0,0,.87); box-shadow: 0 16px 20px 2px rgba(0,0,0,.14), 0 6px 28px 4px rgba(0,0,0,.12), 0 10px 10px -6px rgba(0,0,0,.3); }
  h3 { font-size: 87.600px; line-height: 96px; font-weight: 400; margin: 0; }
  .field { height: 90px; margin-top: 37px; border-bottom: 2px solid #9e9e9e; font-size: 30px; line-height: 86px; color: #d1d1d1; -webkit-text-stroke: .6px #d1d1d1; }

  .desktop { position: relative; height: 109px; display: flex; justify-content: space-between; border-top: 1px solid #aaa; box-sizing: border-box; background: #07070a; }
  .rocks { width: 70px; height: 108px; }
  .dock { width: 2420px; height: 106px; box-sizing: border-box; margin-top: 2px; padding-left: 6.130px; border-radius: 10px 10px 0 0; display: flex; background: linear-gradient(90deg, #5a5355 0, #5e5557 42%, #5e5e6b 54%, #6b7389 67%, #726f80 72%, #a0695f 76%, #cc7258 80%, #d87656 83%, #b66c5c 87%, #906c68 91%, #716975 95%, #6a6d85); }
  .icon { width: 87.740px; height: 106px; }
  .petals rect { mix-blend-mode: multiply; }
  .separator { width: 2px; height: 78px; margin: 14px 18px 0 20px; background: #7b4640; flex: none; }
</style>
